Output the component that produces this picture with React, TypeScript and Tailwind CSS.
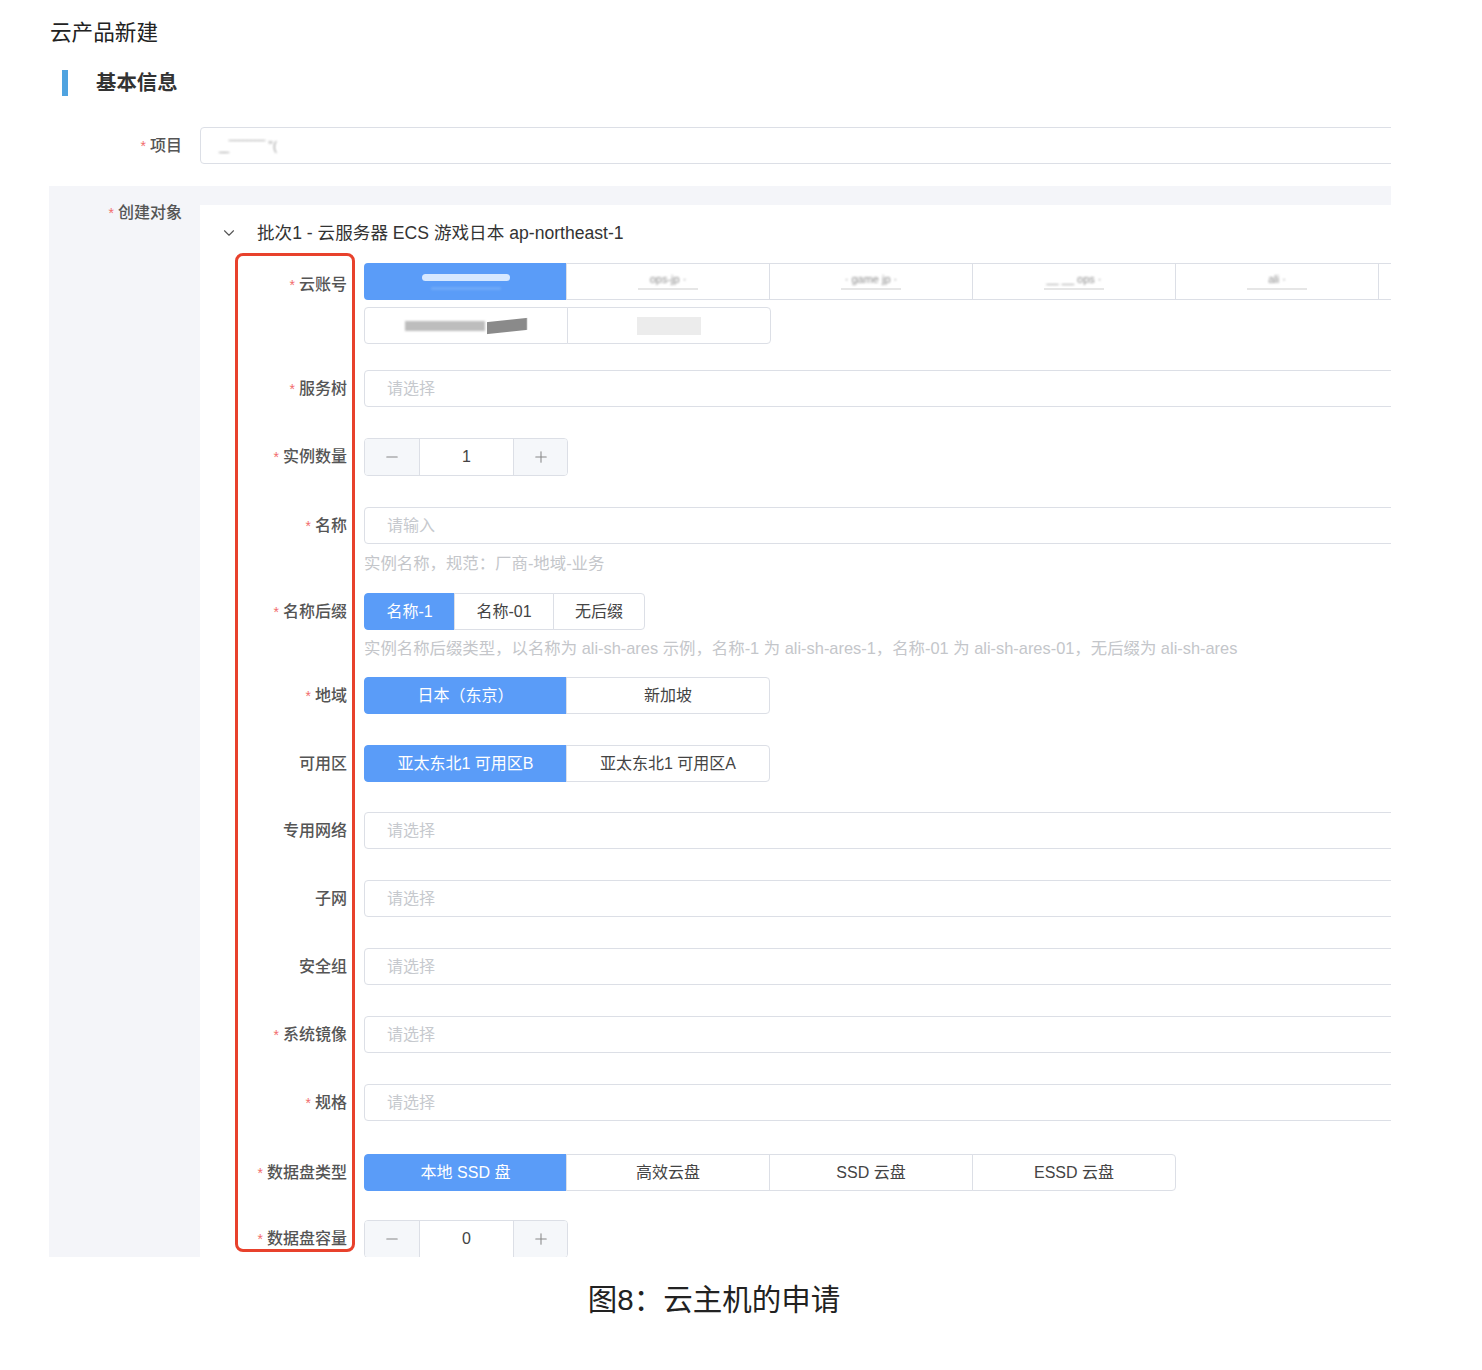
import { ChevronDown, Minus, Plus } from "lucide-react";

const FONT = "font-['Liberation_Sans','Noto_Sans_CJK_SC',sans-serif]";

function Label({ text, required = true, className = "" }: { text: string; required?: boolean; className?: string }) {
  return (
    <div className={`w-[112px] shrink-0 text-right text-[16px] h-[37px] leading-[37px] font-medium text-[#555] ${className}`}>
      {required && <span className="mr-[4px] text-[14px] text-[#f26d6d]">*</span>}
      {text}
    </div>
  );
}

function SelectInput({ placeholder = "请选择" }: { placeholder?: string }) {
  return (
    <div className="h-[37px] w-[1100px] rounded-l-[4px] border border-[#dcdfe6] bg-white pl-[22px] text-[16px] leading-[35px] text-[#c6c9ce]">
      {placeholder}
    </div>
  );
}

function Stepper({ value }: { value: number }) {
  return (
    <div className="flex h-[38px] w-[204px] overflow-hidden rounded-[4px] border border-[#dcdfe6]">
      <div className="flex w-[55px] items-center justify-center border-r border-[#dcdfe6] bg-[#f5f7fa]">
        <Minus size={18} strokeWidth={1.4} className="text-[#888]" />
      </div>
      <div className="flex flex-1 items-center justify-center bg-white text-[16px] text-[#444]">{value}</div>
      <div className="flex w-[54px] items-center justify-center border-l border-[#dcdfe6] bg-[#f5f7fa]">
        <Plus size={18} strokeWidth={1.4} className="text-[#888]" />
      </div>
    </div>
  );
}

type Option = { label: string; width?: string };

function RadioGroup({ options, active = 0 }: { options: Option[]; active?: number }) {
  return (
    <div className="flex h-[37px]">
      {options.map((opt, i) => {
        const first = i === 0;
        const last = i === options.length - 1;
        const selected = i === active;
        return (
          <div
            key={opt.label}
            className={`flex items-center justify-center text-[16px] ${opt.width ?? "w-[203px]"} ${
              selected ? "bg-[#5a9cf8] text-white border border-[#5a9cf8]" : "bg-white text-[#444] border border-[#dcdfe6]"
            } ${first ? "rounded-l-[4px]" : "-ml-px"} ${last ? "rounded-r-[4px]" : ""}`}
          >
            {opt.label}
          </div>
        );
      })}
    </div>
  );
}

function BlurText({ text }: { text: string }) {
  return <span className="blur-[1.2px] text-[11px] leading-[12px] text-[#8a8a8a]">{text}</span>;
}

function AccountButtons() {
  const others = ["ops-jp ·", "· game jp ·", "__ __ ops ·", "ali ·"];
  return (
    <div className="flex flex-col gap-[7px]">
      <div className="flex h-[37px]">
        <div className="flex w-[203px] flex-col items-center justify-center gap-[6px] rounded-l-[4px] bg-[#5a9cf8]">
          <div className="h-[7px] w-[88px] rounded-full bg-[#d6e8ff] blur-[0.6px]" />
          <div className="h-[3px] w-[70px] bg-[#6ea9f8] blur-[1px]" />
        </div>
        {others.map((t) => (
          <div key={t} className="-ml-px flex w-[204px] flex-col items-center justify-center border border-[#dcdfe6] bg-white">
            <BlurText text={t} />
            <div className="mt-[3px] h-[2px] w-[60px] bg-[#e6e6e6]" />
          </div>
        ))}
        <div className="-ml-px w-[204px] border border-[#dcdfe6] bg-white" />
      </div>
      <div className="flex h-[37px]">
        <div className="flex w-[204px] items-center justify-center gap-[2px] rounded-l-[4px] border border-[#dcdfe6] bg-white">
          <div className="h-[10px] w-[80px] bg-[#bdbdbd] blur-[1px]" />
          <div className="h-[12px] w-[40px] -skew-y-6 bg-[#8a8a8a] blur-[0.5px]" />
        </div>
        <div className="-ml-px flex w-[204px] items-center justify-center rounded-r-[4px] border border-[#dcdfe6] bg-white">
          <div className="h-[18px] w-[64px] bg-[#ececec]" />
        </div>
      </div>
    </div>
  );
}

function HelpText({ text, className = "" }: { text: string; className?: string }) {
  return <div className={`text-[16.4px] leading-[24px] text-[#c4c6ca] whitespace-nowrap ${className}`}>{text}</div>;
}

export default function App() {
  return (
    <div className={`h-[1370px] w-[1482px] bg-white ${FONT}`}>
      <div className="ml-[49px] h-[1257px] w-[1342px] overflow-hidden">
        <div className="pl-[1px] pt-[19px] text-[21.6px] leading-[28px] text-[#222]">云产品新建</div>

        <div className="mt-[23px] flex h-[26px] items-center">
          <div className="ml-[13px] h-[26px] w-[6px] bg-[#4fa3e0]" />
          <div className="ml-[28px] text-[20.4px] font-semibold text-[#333]">基本信息</div>
        </div>

        <div className="mt-[31px] flex items-center">
          <div className="w-[133px] shrink-0 text-right text-[16px] font-medium text-[#555]">
            <span className="mr-[4px] text-[14px] text-[#f26d6d]">*</span>项目
          </div>
          <div className="ml-[18px] flex h-[37px] w-[1300px] shrink-0 items-center rounded-l-[4px] border border-[#dcdfe6] pl-[18px]">
            <span className="blur-[0.8px] text-[12px] text-[#999]">_̲ ‾‾‾‾‾‾‾‾‾ ''(</span>
          </div>
        </div>

        <div className="mt-[22px] flex items-start bg-[#f4f5f9]">
          <div className="w-[133px] shrink-0 pt-[15px] text-right text-[16px] leading-[24px] font-medium text-[#555]">
            <span className="mr-[4px] text-[14px] text-[#f26d6d]">*</span>创建对象
          </div>

          <div className="ml-[18px] mt-[19px] w-[1400px] shrink-0 bg-white pb-[40px]">
            <div className="flex h-[56px] items-center pl-[20px]">
              <ChevronDown size={18} strokeWidth={1.5} className="text-[#555]" />
              <div className="ml-[19px] text-[17.6px] text-[#333]">批次1 - 云服务器 ECS 游戏日本 ap-northeast-1</div>
            </div>

            <div className="relative pl-[35px] pt-[2px]">
              <div className="pointer-events-none absolute left-[35px] top-[-8px] h-[999px] w-[120px] rounded-[8px] border-[3px] border-[#e8412c]" />

              <div className="mb-[26px] flex">
                <Label text="云账号" className="mt-[3px]" />
                <div className="ml-[17px]">
                  <AccountButtons />
                </div>
              </div>

              <div className="mb-[31px] flex">
                <Label text="服务树" />
                <div className="ml-[17px]">
                  <SelectInput />
                </div>
              </div>

              <div className="mb-[31px] flex">
                <Label text="实例数量" />
                <div className="ml-[17px]">
                  <Stepper value={1} />
                </div>
              </div>

              <div className="mb-[18px] flex">
                <Label text="名称" />
                <div className="ml-[17px]">
                  <SelectInput placeholder="请输入" />
                  <HelpText text="实例名称，规范：厂商-地域-业务" className="mt-[7px]" />
                </div>
              </div>

              <div className="mb-[17px] flex">
                <Label text="名称后缀" />
                <div className="ml-[17px]">
                  <RadioGroup
                    options={[
                      { label: "名称-1", width: "w-[91px]" },
                      { label: "名称-01", width: "w-[100px]" },
                      { label: "无后缀", width: "w-[92px]" },
                    ]}
                  />
                  <HelpText
                    text="实例名称后缀类型，以名称为 ali-sh-ares 示例，名称-1 为 ali-sh-ares-1，名称-01 为 ali-sh-ares-01，无后缀为 ali-sh-ares"
                    className="mt-[6px]"
                  />
                </div>
              </div>

              <div className="mb-[31px] flex">
                <Label text="地域" />
                <div className="ml-[17px]">
                  <RadioGroup options={[{ label: "日本（东京）" }, { label: "新加坡", width: "w-[204px]" }]} />
                </div>
              </div>

              <div className="mb-[30px] flex">
                <Label text="可用区" required={false} />
                <div className="ml-[17px]">
                  <RadioGroup options={[{ label: "亚太东北1 可用区B" }, { label: "亚太东北1 可用区A", width: "w-[204px]" }]} />
                </div>
              </div>

              <div className="mb-[31px] flex">
                <Label text="专用网络" required={false} />
                <div className="ml-[17px]">
                  <SelectInput />
                </div>
              </div>

              <div className="mb-[31px] flex">
                <Label text="子网" required={false} />
                <div className="ml-[17px]">
                  <SelectInput />
                </div>
              </div>

              <div className="mb-[31px] flex">
                <Label text="安全组" required={false} />
                <div className="ml-[17px]">
                  <SelectInput />
                </div>
              </div>

              <div className="mb-[31px] flex">
                <Label text="系统镜像" />
                <div className="ml-[17px]">
                  <SelectInput />
                </div>
              </div>

              <div className="mb-[33px] flex">
                <Label text="规格" />
                <div className="ml-[17px]">
                  <SelectInput />
                </div>
              </div>

              <div className="mb-[29px] flex">
                <Label text="数据盘类型" />
                <div className="ml-[17px]">
                  <RadioGroup
                    options={[
                      { label: "本地 SSD 盘" },
                      { label: "高效云盘", width: "w-[204px]" },
                      { label: "SSD 云盘", width: "w-[204px]" },
                      { label: "ESSD 云盘", width: "w-[204px]" },
                    ]}
                  />
                </div>
              </div>

              <div className="flex">
                <Label text="数据盘容量" />
                <div className="ml-[17px]">
                  <Stepper value={0} />
                </div>
              </div>
            </div>
          </div>
        </div>
      </div>

      <div className="mt-[23px] flex w-[1428px] justify-center text-[29.5px] leading-[40px] text-[#222]">图8：云主机的申请</div>
    </div>
  );
}
